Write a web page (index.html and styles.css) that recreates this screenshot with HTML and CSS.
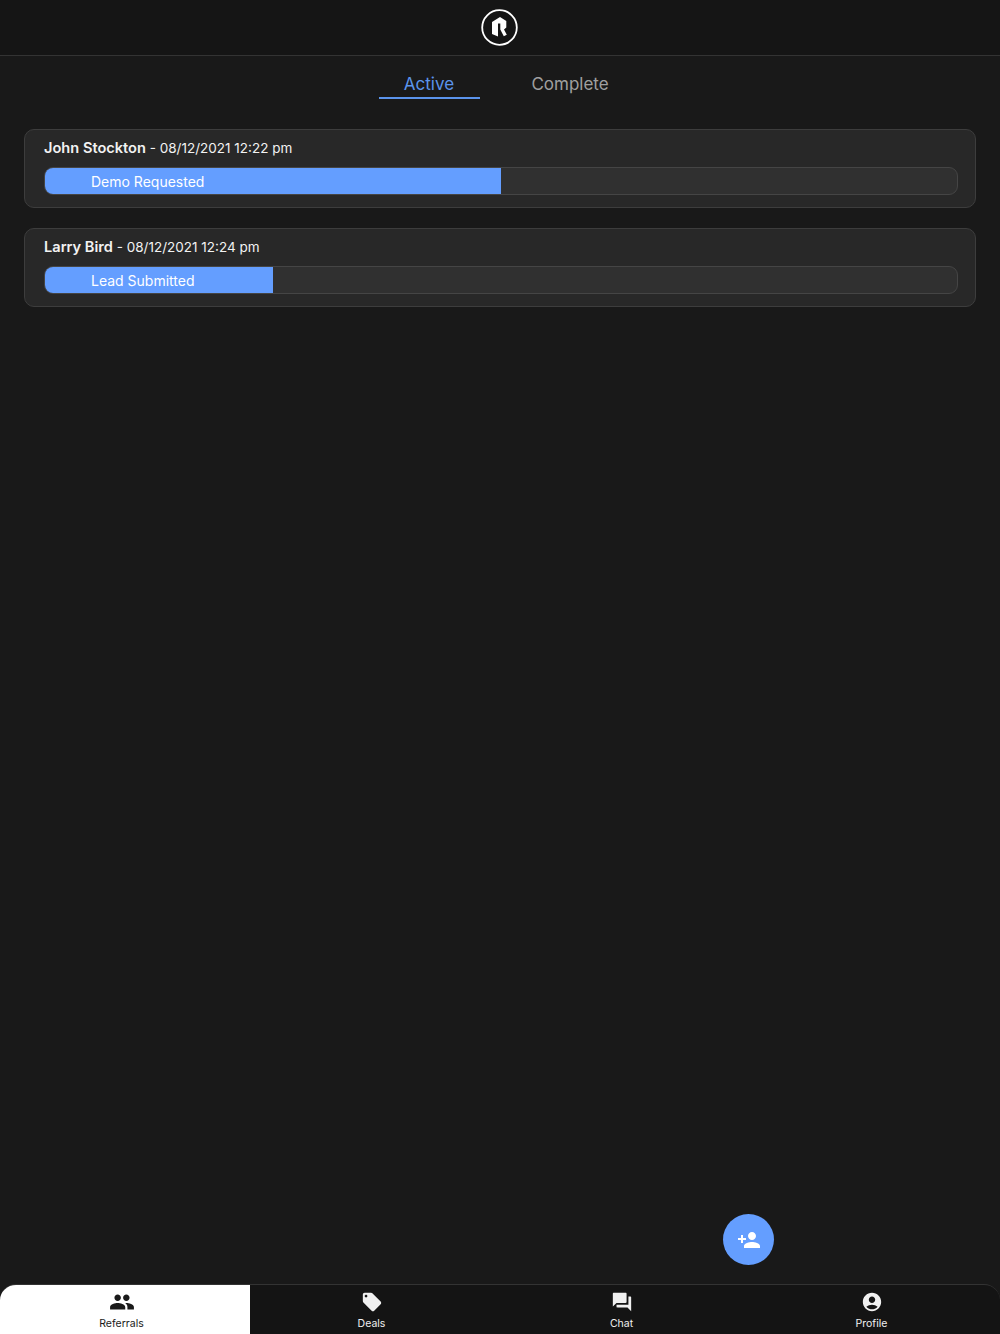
FILE: index.html
```html
<html>
	<head>
	<title>Referrals</title>
	<link rel="stylesheet" href="styles.css">
	</head>
	<body>
		<div class="app">
		<div class="topbar">
			<svg class="logo" width="37" height="37" viewBox="0 0 37 37">
				<circle cx="18.5" cy="18.5" r="17.3" fill="none" stroke="#fff" stroke-width="1.8"/>
				<path d="M11 13 L19 8 L25.3 12 L25.3 18.5 L23 20.5 L25.8 25.7 L22.8 27.2 L19.3 20.5 L19.3 14.5 L17 14.5 L17 27.5 L11 25 Z" fill="#fff"/>
			</svg>
		</div>
		<div class="tabs">
			<div class="tab active">Active</div>
			<div class="tab">Complete</div>
		</div>
		<div class="list">
			<div class="card">
				<div class="title"><b>John Stockton</b> - 08/12/2021 12:22 pm</div>
				<div class="bar"><div class="fill" style="width:50%">Demo Requested</div></div>
			</div>
			<div class="card">
				<div class="title"><b>Larry Bird</b> - 08/12/2021 12:24 pm</div>
				<div class="bar"><div class="fill" style="width:25%">Lead Submitted</div></div>
			</div>
		</div>
		<div class="fab">
			<svg width="24" height="24" viewBox="0 0 24 24" fill="#fff"><path d="M15 12c2.21 0 4-1.79 4-4s-1.79-4-4-4-4 1.79-4 4 1.79 4 4 4zm-9-2V7H4v3H1v2h3v3h2v-3h3v-2H6zm9 4c-2.67 0-8 1.34-8 4v2h16v-2c0-2.66-5.33-4-8-4z"/></svg>
		</div>
		<div class="nav">
			<div class="navitem selected">
				<svg width="26" height="26" viewBox="0 0 24 24" fill="currentColor"><path d="M16 11c1.66 0 2.99-1.34 2.99-3S17.66 5 16 5c-1.66 0-3 1.34-3 3s1.34 3 3 3zm-8 0c1.66 0 2.99-1.34 2.99-3S9.66 5 8 5C6.34 5 5 6.34 5 8s1.34 3 3 3zm0 2c-2.33 0-7 1.17-7 3.5V19h14v-2.5c0-2.33-4.67-3.5-7-3.5zm8 0c-.29 0-.62.02-.97.05 1.16.84 1.97 1.97 1.97 3.45V19h6v-2.5c0-2.33-4.67-3.5-7-3.5z"/></svg>
				<span>Referrals</span>
			</div>
			<div class="navitem">
				<svg width="22" height="26" viewBox="0 0 24 24" fill="currentColor"><path d="M21.41 11.58l-9-9C12.05 2.22 11.55 2 11 2H4c-1.1 0-2 .9-2 2v7c0 .55.22 1.05.59 1.42l9 9c.36.36.86.58 1.41.58.55 0 1.05-.22 1.41-.59l7-7c.37-.36.59-.86.59-1.41 0-.55-.23-1.06-.59-1.42zM5.5 7C4.67 7 4 6.33 4 5.5S4.67 4 5.5 4 7 4.67 7 5.5 6.33 7 5.5 7z"/></svg>
				<span>Deals</span>
			</div>
			<div class="navitem">
				<svg width="22" height="26" viewBox="0 0 24 24" fill="currentColor"><path d="M21 6h-2v9H6v2c0 .55.45 1 1 1h11l4 4V7c0-.55-.45-1-1-1zm-4 6V3c0-.55-.45-1-1-1H3c-.55 0-1 .45-1 1v14l4-4h10c.55 0 1-.45 1-1z"/></svg>
				<span>Chat</span>
			</div>
			<div class="navitem">
				<svg width="22" height="26" viewBox="0 0 24 24" fill="currentColor"><path d="M12 2C6.48 2 2 6.48 2 12s4.48 10 10 10 10-4.48 10-10S17.52 2 12 2zm0 4c1.93 0 3.5 1.57 3.5 3.5S13.93 13 12 13s-3.5-1.57-3.5-3.5S10.07 6 12 6zm0 14c-2.03 0-4.43-.82-6.14-2.88C7.55 15.8 9.68 15 12 15s4.45.8 6.14 2.12C16.43 19.18 14.03 20 12 20z"/></svg>
				<span>Profile</span>
			</div>
		</div>
		</div>
	</body>
</html>
```

FILE: styles.css
```css
body{
	margin:0;
	background-color:#191919;
	font-family:'Inter','Open Sans',sans-serif;
	color:#fff;
}
.app{
	position:relative;
	height:1334px;
	display:flex;
	flex-direction:column;
	overflow:hidden;
}
.topbar{
	height:46px;
	background-color:#151515;
	border-bottom:1px solid #333;
	display:flex;
	justify-content:center;
	align-items:flex-start;
	padding-top:9px;
	padding-right:1px;
}
.logo{
	display:block;
}
.tabs{
	display:flex;
	justify-content:center;
	height:43px;
	padding-right:1px;
}
.tab{
	width:101px;
	margin:0 20px;
	padding-top:18px;
	box-sizing:border-box;
	height:43px;
	text-align:center;
	font-size:17px;
	line-height:21px;
	color:#a0a0a0;
	white-space:nowrap;
}
.tab.active{
	color:#5b94ec;
	border-bottom:2px solid #5b94ec;
}
.list{
	flex:1;
	padding:30px 24px 0;
	display:flex;
	flex-direction:column;
	gap:20px;
}
.card{
	height:79px;
	box-sizing:border-box;
	background-color:#282828;
	border:1px solid #3d3d3d;
	border-radius:10px;
	padding:9px 17px 0 19px;
}
.title{
	font-size:13.5px;
	line-height:19px;
	color:#f2f2f2;
	white-space:nowrap;
}
.title b{
	font-size:14.6px;
	font-weight:600;
}
.bar{
	margin-top:9px;
	height:28px;
	box-sizing:border-box;
	background-color:#303030;
	border:1px solid #454545;
	border-radius:9px;
	overflow:hidden;
}
.fill{
	height:100%;
	background-color:#649eff;
	padding-left:46px;
	box-sizing:border-box;
	font-size:14px;
	line-height:27px;
	color:#fff;
	white-space:nowrap;
}
.fab{
	position:absolute;
	left:723px;
	top:1214px;
	width:51px;
	height:51px;
	border-radius:50%;
	background-color:#649eff;
	display:flex;
	align-items:center;
	justify-content:center;
}
.nav{
	height:50px;
	display:grid;
	grid-template-columns:repeat(4,1fr);
	background-color:#141414;
	border-top:1px solid #333;
	border-radius:16px 16px 0 0;
	box-sizing:border-box;
	overflow:hidden;
}
.navitem{
	display:flex;
	flex-direction:column;
	align-items:center;
	height:50px;
	color:#f0f0f0;
	font-size:10.5px;
	padding:4px 7px 0 0;
	box-sizing:border-box;
}
.navitem svg{
	display:block;
	height:26px;
}
.navitem span{
	margin-top:2px;
	line-height:14px;
}
.navitem.selected{
	background-color:#fff;
	color:#1a1a1a;
	margin-top:-1px;
	height:51px;
	padding-top:5px;
}
```
